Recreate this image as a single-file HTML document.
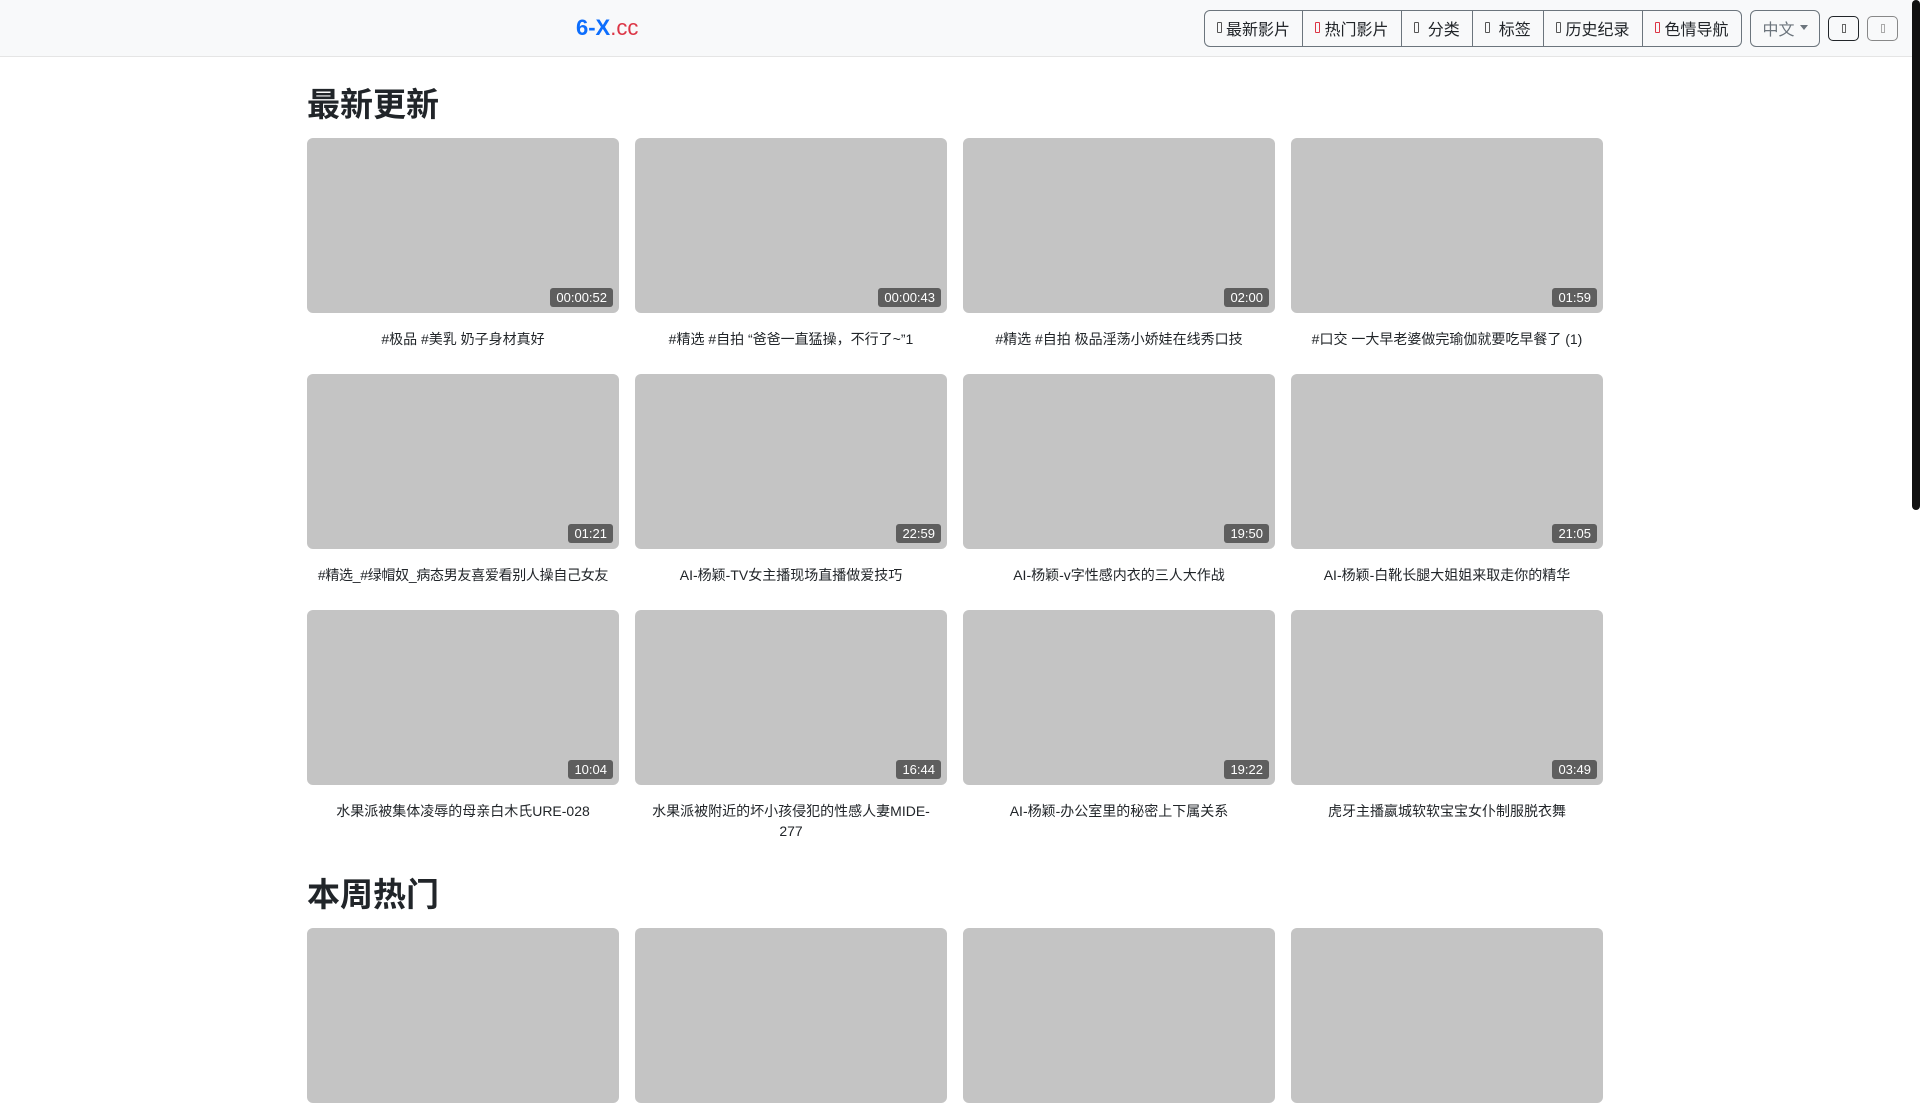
<!DOCTYPE html>
<html><head><meta charset="utf-8"><style>
*{box-sizing:border-box;margin:0;padding:0}
body{width:1920px;height:1080px;overflow:hidden;background:#fff;font-family:"Liberation Sans","Noto Sans CJK SC",sans-serif;color:#212529;position:relative}
.nav{position:absolute;left:0;top:0;width:1912px;height:57px;background:#f8f9fa;border-bottom:1px solid #e5e5e5}
.logo{position:absolute;left:576px;top:15px;font-size:22px;font-weight:bold;color:#0d6efd}
.logo span{color:#dc3545;font-weight:normal}
.grp{position:absolute;left:1204px;top:10px;height:37px;display:flex;border:1px solid #6c757d;border-radius:6px;overflow:hidden}
.grp div{height:100%;display:flex;align-items:center;justify-content:center;font-size:16px;border-right:1px solid #6c757d;color:#212529;white-space:nowrap;padding-bottom:2px}
.grp div:last-child{border-right:none}
.ic{display:inline-block;width:5px;height:11px;border:1px solid #555;border-radius:1px;margin-right:4px}
.r{border-color:#dc3545}
.lang{position:absolute;left:1750px;top:10px;width:70px;height:37px;border:1px solid #6c757d;border-radius:6px;color:#6c757d;font-size:16px;display:flex;align-items:center;justify-content:center;padding-bottom:2px}
.lang:after{content:"";border-top:5px solid #6c757d;border-left:4px solid transparent;border-right:4px solid transparent;margin-left:5px}
.sb{position:absolute;top:16px;width:31px;height:25px;border:1px solid #212529;border-radius:5px;display:flex;align-items:center;justify-content:center}
.sb i{width:4px;height:9px;border:1px solid #666}
.scroll{position:absolute;left:1912px;top:0;width:8px;height:510px;background:#111;border-radius:4px}
h2{position:absolute;left:307px;font-size:33px;font-weight:bold}
.card{position:absolute;width:312px}
.th{height:175px;background:#c4c4c4;border-radius:6px;position:relative}
.d{position:absolute;right:6px;bottom:6px;background:#5e5e5e;color:#fff;font-size:13px;padding:2px 6px;border-radius:3px}
.t{text-align:center;font-size:14px;margin-top:16px;line-height:20px;padding:0 10px}
</style></head><body>
<div class="nav">
<div class="logo">6-X<span>.cc</span></div>
<div class="grp">
<div style="width:98px"><i class="ic"></i>最新影片</div>
<div style="width:99px"><i class="ic r"></i>热门影片</div>
<div style="width:71px"><i class="ic"></i>&nbsp;分类</div>
<div style="width:71px"><i class="ic"></i>&nbsp;标签</div>
<div style="width:99px"><i class="ic"></i>历史纪录</div>
<div style="width:98px"><i class="ic r"></i>色情导航</div>
</div>
<div class="lang">中文</div>
<div class="sb" style="left:1828px"><i></i></div>
<div class="sb" style="left:1867px;border-color:#888"><i style="border-color:#aaa"></i></div>
</div>
<div class="scroll"></div>
<h2 style="top:78px">最新更新</h2>
<div class="card" style="left:307px;top:138px"><div class="th"><span class="d">00:00:52</span></div><div class="t">#极品 #美乳 奶子身材真好</div></div>
<div class="card" style="left:635px;top:138px"><div class="th"><span class="d">00:00:43</span></div><div class="t">#精选 #自拍 “爸爸一直猛操，不行了~”1</div></div>
<div class="card" style="left:963px;top:138px"><div class="th"><span class="d">02:00</span></div><div class="t">#精选 #自拍 极品淫荡小娇娃在线秀口技</div></div>
<div class="card" style="left:1291px;top:138px"><div class="th"><span class="d">01:59</span></div><div class="t">#口交 一大早老婆做完瑜伽就要吃早餐了 (1)</div></div>
<div class="card" style="left:307px;top:374px"><div class="th"><span class="d">01:21</span></div><div class="t" style="padding:0;letter-spacing:-0.3px">#精选_#绿帽奴_病态男友喜爱看别人操自己女友</div></div>
<div class="card" style="left:635px;top:374px"><div class="th"><span class="d">22:59</span></div><div class="t">AI-杨颖-TV女主播现场直播做爱技巧</div></div>
<div class="card" style="left:963px;top:374px"><div class="th"><span class="d">19:50</span></div><div class="t">AI-杨颖-v字性感内衣的三人大作战</div></div>
<div class="card" style="left:1291px;top:374px"><div class="th"><span class="d">21:05</span></div><div class="t">AI-杨颖-白靴长腿大姐姐来取走你的精华</div></div>
<div class="card" style="left:307px;top:610px"><div class="th"><span class="d">10:04</span></div><div class="t">水果派被集体凌辱的母亲白木氏URE-028</div></div>
<div class="card" style="left:635px;top:610px"><div class="th"><span class="d">16:44</span></div><div class="t">水果派被附近的坏小孩侵犯的性感人妻MIDE-277</div></div>
<div class="card" style="left:963px;top:610px"><div class="th"><span class="d">19:22</span></div><div class="t">AI-杨颖-办公室里的秘密上下属关系</div></div>
<div class="card" style="left:1291px;top:610px"><div class="th"><span class="d">03:49</span></div><div class="t">虎牙主播嬴城软软宝宝女仆制服脱衣舞</div></div>
<h2 style="top:868px">本周热门</h2>
<div class="card" style="left:307px;top:928px"><div class="th"></div></div>
<div class="card" style="left:635px;top:928px"><div class="th"></div></div>
<div class="card" style="left:963px;top:928px"><div class="th"></div></div>
<div class="card" style="left:1291px;top:928px"><div class="th"></div></div>
</body></html>
